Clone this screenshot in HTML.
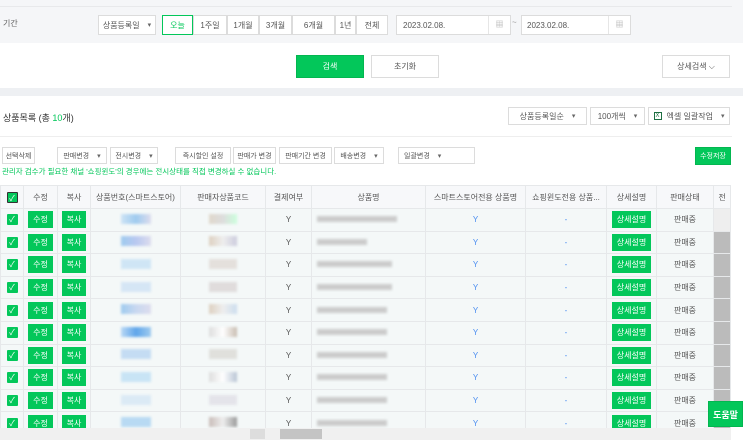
<!DOCTYPE html>
<html><head><meta charset="utf-8"><style>
*{box-sizing:border-box;margin:0;padding:0}
body{width:743px;height:440px;overflow:hidden;background:#fff;font-family:"Liberation Sans","Noto Sans CJK KR",sans-serif;font-size:8px;color:#333;position:relative}
.a{position:absolute}
.btn{position:absolute;border:1px solid #dcdcdc;background:#fff;display:flex;align-items:center;justify-content:center;color:#555;font-size:8px}
.dd:after{content:"▾";margin-left:8px;font-size:7px;color:#666}
.g{background:#03c75a;color:#fff;border:1px solid #03b650}
table{border-collapse:collapse;position:absolute;left:0;top:185px;table-layout:fixed}
td,th{border:1px solid #e6e8ea;height:22.6px;text-align:center;font-weight:normal;font-size:8px;color:#555;overflow:hidden;white-space:nowrap;padding:0}
th{background:#f7f8fa;height:23px}
tbody td{background:#f4f8f8}
.cb{display:inline-block;width:11px;height:11px;background:#03c75a;color:#fff;font-size:8px;line-height:11px;border-radius:1px}
.gb{display:inline-block;background:#03c75a;color:#fff;padding:0 5px;height:17px;line-height:17px;font-size:8px}
.blur{filter:blur(1.2px)}
.y{color:#4a8df0}
</style></head><body>
<div class="a" style="left:0;top:0;width:743px;height:43px;background:#f5f6f8"></div>
<div class="a" style="left:0;top:6px;width:732px;height:1px;background:#e8e9eb"></div>
<div class="a" style="left:3px;top:18px;color:#666">기간</div>
<div class="btn dd" style="left:98px;top:15px;width:58px;height:20px">상품등록일</div>
<div class="btn" style="left:162px;top:15px;width:31px;height:20px;border-color:#03c75a;color:#03c75a">오늘</div>
<div class="btn" style="left:193px;top:15px;width:34px;height:20px">1주일</div>
<div class="btn" style="left:227px;top:15px;width:32px;height:20px">1개월</div>
<div class="btn" style="left:259px;top:15px;width:33px;height:20px">3개월</div>
<div class="btn" style="left:292px;top:15px;width:43px;height:20px">6개월</div>
<div class="btn" style="left:335px;top:15px;width:21px;height:20px">1년</div>
<div class="btn" style="left:356px;top:15px;width:32px;height:20px">전체</div>
<div class="btn" style="left:396px;top:15px;width:115px;height:20px;justify-content:flex-start;padding-left:6px">2023.02.08.<span style="position:absolute;right:0;top:0;width:22px;height:18px;border-left:1px solid #e6e6e6;text-align:center;line-height:18px;color:#aaa">▦</span></div>
<div class="a" style="left:512px;top:18px;color:#999">~</div>
<div class="btn" style="left:521px;top:15px;width:110px;height:20px;justify-content:flex-start;padding-left:5px">2023.02.08.<span style="position:absolute;right:0;top:0;width:22px;height:18px;border-left:1px solid #e6e6e6;text-align:center;line-height:18px;color:#aaa">▦</span></div>
<div class="btn g" style="left:296px;top:55px;width:68px;height:23px">검색</div>
<div class="btn" style="left:371px;top:55px;width:68px;height:23px">초기화</div>
<div class="btn" style="left:662px;top:55px;width:68px;height:23px">상세검색 ⌵</div>
<div class="a" style="left:0;top:88px;width:743px;height:8px;background:#eef0f3"></div>
<div class="a" style="left:3px;top:111px;font-size:9px;color:#333">상품목록 (총 <span style="color:#03c75a">10</span>개)</div>
<div class="btn dd" style="left:508px;top:107px;width:79px;height:18px">상품등록일순</div>
<div class="btn dd" style="left:590px;top:107px;width:55px;height:18px">100개씩</div>
<div class="btn dd" style="left:648px;top:107px;width:82px;height:18px"><span style="color:#1d6f42;border:1px solid #1d6f42;font-size:6px;padding:0 1px;margin-right:5px">X</span>엑셀 일괄작업</div>
<div class="a" style="left:0;top:136px;width:732px;height:1px;background:#eee"></div>
<div class="btn" style="left:2px;top:147px;width:33px;height:17px;font-size:7px">선택삭제</div>
<div class="btn dd" style="left:57px;top:147px;width:50px;height:17px;font-size:7px">판매변경</div>
<div class="btn dd" style="left:110px;top:147px;width:48px;height:17px;font-size:7px">전시변경</div>
<div class="btn" style="left:175px;top:147px;width:56px;height:17px;font-size:7px">즉시할인 설정</div>
<div class="btn" style="left:233px;top:147px;width:43px;height:17px;font-size:7px">판매가 변경</div>
<div class="btn" style="left:279px;top:147px;width:53px;height:17px;font-size:7px">판매기간 변경</div>
<div class="btn dd" style="left:334px;top:147px;width:50px;height:17px;font-size:7px">배송변경</div>
<div class="btn dd" style="left:398px;top:147px;width:77px;height:17px;font-size:7px;justify-content:flex-start;padding-left:5px">일괄변경</div>
<div class="btn g" style="left:695px;top:147px;width:36px;height:18px;font-size:7px">수정저장</div>
<div class="a" style="left:2px;top:166px;color:#03c75a;font-size:7.5px">관리자 검수가 필요한 채널 '쇼핑윈도'의 경우에는 전시상태를 직접 변경하실 수 없습니다.</div>
<table>
<colgroup><col style="width:23px"><col style="width:34px"><col style="width:33px"><col style="width:90px"><col style="width:85px"><col style="width:46px"><col style="width:114px"><col style="width:100px"><col style="width:81px"><col style="width:50px"><col style="width:57px"><col style="width:17px"></colgroup>
<thead><tr><th><span class="cb" style="border:1px solid #333">✓</span></th><th>수정</th><th>복사</th><th>상품번호(스마트스토어)</th><th>판매자상품코드</th><th>결제여부</th><th>상품명</th><th>스마트스토어전용 상품명</th><th>쇼핑윈도전용 상품...</th><th>상세설명</th><th>판매상태</th><th>전</th></tr></thead>
<tbody>
<tr><td><span class="cb">✓</span></td><td><span class="gb">수정</span></td><td><span class="gb">복사</span></td><td><span class="blur" style="display:inline-block;width:30px;height:10px;background:linear-gradient(90deg,#cde3f5,#9fcbef,#dde)"></span></td><td><span class="blur" style="display:inline-block;width:28px;height:10px;background:linear-gradient(90deg,#e0d8cc,#ddd,#cfd)"></span></td><td>Y</td><td style="text-align:left;padding-left:5px"><span class="blur" style="display:inline-block;width:80px;height:6px;background:#ccc"></span></td><td class="y">Y</td><td class="y">-</td><td><span class="gb">상세설명</span></td><td>판매중</td><td style="background:#eee"></td></tr>
<tr><td><span class="cb">✓</span></td><td><span class="gb">수정</span></td><td><span class="gb">복사</span></td><td><span class="blur" style="display:inline-block;width:30px;height:10px;background:linear-gradient(90deg,#9fcbef,#b8c8f0,#dde)"></span></td><td><span class="blur" style="display:inline-block;width:28px;height:10px;background:linear-gradient(90deg,#ddd0c0,#eee,#ccd)"></span></td><td>Y</td><td style="text-align:left;padding-left:5px"><span class="blur" style="display:inline-block;width:50px;height:6px;background:#ccc"></span></td><td class="y">Y</td><td class="y">-</td><td><span class="gb">상세설명</span></td><td>판매중</td><td style="background:#bbb"></td></tr>
<tr><td><span class="cb">✓</span></td><td><span class="gb">수정</span></td><td><span class="gb">복사</span></td><td><span class="blur" style="display:inline-block;width:30px;height:10px;background:#cfe5f5"></span></td><td><span class="blur" style="display:inline-block;width:28px;height:10px;background:#e4e0dc"></span></td><td>Y</td><td style="text-align:left;padding-left:5px"><span class="blur" style="display:inline-block;width:75px;height:6px;background:#ccc"></span></td><td class="y">Y</td><td class="y">-</td><td><span class="gb">상세설명</span></td><td>판매중</td><td style="background:#bbb"></td></tr>
<tr><td><span class="cb">✓</span></td><td><span class="gb">수정</span></td><td><span class="gb">복사</span></td><td><span class="blur" style="display:inline-block;width:30px;height:10px;background:#d5e6f5"></span></td><td><span class="blur" style="display:inline-block;width:28px;height:10px;background:#e0dcdc"></span></td><td>Y</td><td style="text-align:left;padding-left:5px"><span class="blur" style="display:inline-block;width:75px;height:6px;background:#ccc"></span></td><td class="y">Y</td><td class="y">-</td><td><span class="gb">상세설명</span></td><td>판매중</td><td style="background:#bbb"></td></tr>
<tr><td><span class="cb">✓</span></td><td><span class="gb">수정</span></td><td><span class="gb">복사</span></td><td><span class="blur" style="display:inline-block;width:30px;height:10px;background:linear-gradient(90deg,#9fcbef,#c8d8f0,#dde)"></span></td><td><span class="blur" style="display:inline-block;width:28px;height:10px;background:linear-gradient(90deg,#ddd0c0,#eee,#cde)"></span></td><td>Y</td><td style="text-align:left;padding-left:5px"><span class="blur" style="display:inline-block;width:70px;height:6px;background:#ccc"></span></td><td class="y">Y</td><td class="y">-</td><td><span class="gb">상세설명</span></td><td>판매중</td><td style="background:#bbb"></td></tr>
<tr><td><span class="cb">✓</span></td><td><span class="gb">수정</span></td><td><span class="gb">복사</span></td><td><span class="blur" style="display:inline-block;width:30px;height:10px;background:linear-gradient(90deg,#b8d8f5,#5fa5ea,#9fcbef)"></span></td><td><span class="blur" style="display:inline-block;width:28px;height:10px;background:linear-gradient(90deg,#ddd,#fff,#c8bcb0)"></span></td><td>Y</td><td style="text-align:left;padding-left:5px"><span class="blur" style="display:inline-block;width:70px;height:6px;background:#ccc"></span></td><td class="y">Y</td><td class="y">-</td><td><span class="gb">상세설명</span></td><td>판매중</td><td style="background:#bbb"></td></tr>
<tr><td><span class="cb">✓</span></td><td><span class="gb">수정</span></td><td><span class="gb">복사</span></td><td><span class="blur" style="display:inline-block;width:30px;height:10px;background:#c4dcf3"></span></td><td><span class="blur" style="display:inline-block;width:28px;height:10px;background:#e0e0dc"></span></td><td>Y</td><td style="text-align:left;padding-left:5px"><span class="blur" style="display:inline-block;width:70px;height:6px;background:#ccc"></span></td><td class="y">Y</td><td class="y">-</td><td><span class="gb">상세설명</span></td><td>판매중</td><td style="background:#bbb"></td></tr>
<tr><td><span class="cb">✓</span></td><td><span class="gb">수정</span></td><td><span class="gb">복사</span></td><td><span class="blur" style="display:inline-block;width:30px;height:10px;background:#c8e4f5"></span></td><td><span class="blur" style="display:inline-block;width:28px;height:10px;background:linear-gradient(90deg,#ddd,#fff,#b8c4d4)"></span></td><td>Y</td><td style="text-align:left;padding-left:5px"><span class="blur" style="display:inline-block;width:70px;height:6px;background:#ccc"></span></td><td class="y">Y</td><td class="y">-</td><td><span class="gb">상세설명</span></td><td>판매중</td><td style="background:#bbb"></td></tr>
<tr><td><span class="cb">✓</span></td><td><span class="gb">수정</span></td><td><span class="gb">복사</span></td><td><span class="blur" style="display:inline-block;width:30px;height:10px;background:#dbeaf5"></span></td><td><span class="blur" style="display:inline-block;width:28px;height:10px;background:#e4e4ea"></span></td><td>Y</td><td style="text-align:left;padding-left:5px"><span class="blur" style="display:inline-block;width:70px;height:6px;background:#ccc"></span></td><td class="y">Y</td><td class="y">-</td><td><span class="gb">상세설명</span></td><td>판매중</td><td style="background:#bbb"></td></tr>
<tr><td><span class="cb">✓</span></td><td><span class="gb">수정</span></td><td><span class="gb">복사</span></td><td><span class="blur" style="display:inline-block;width:30px;height:10px;background:#b8daf3"></span></td><td><span class="blur" style="display:inline-block;width:28px;height:10px;background:linear-gradient(90deg,#c8bcb8,#eee,#999)"></span></td><td>Y</td><td style="text-align:left;padding-left:5px"><span class="blur" style="display:inline-block;width:70px;height:6px;background:#ccc"></span></td><td class="y">Y</td><td class="y">-</td><td><span class="gb">상세설명</span></td><td>판매중</td><td style="background:#bbb"></td></tr>
</tbody></table>
<div class="a" style="left:0;top:428px;width:732px;height:12px;background:#f0f0f0"></div>
<div class="a" style="left:250px;top:429px;width:15px;height:10px;background:#ddd"></div>
<div class="a" style="left:280px;top:429px;width:42px;height:10px;background:#c4c4c4"></div>
<div class="a" style="left:731px;top:180px;width:12px;height:260px;background:#fff"></div>
<div class="btn g" style="left:708px;top:401px;width:35px;height:26px;font-size:9px;font-weight:bold">도움말</div>
</body></html>
